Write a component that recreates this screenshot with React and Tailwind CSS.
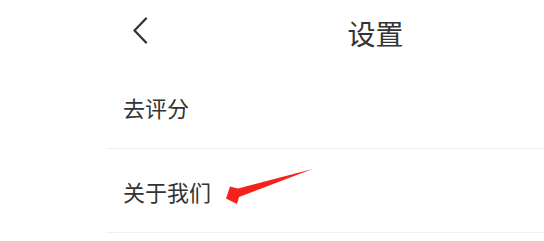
import React from 'react';

const font = { fontFamily: '"Noto Sans CJK SC", "Noto Sans", sans-serif' };

const BackIcon = () => (
    <svg width="16" height="27" viewBox="0 0 16 27" fill="none">
        <path d="M14 1.5 L2.5 13.5 L14 25.5" stroke="#333333" strokeWidth="2.3" strokeLinecap="round" strokeLinejoin="round" />
    </svg>
);

const Row = ({ label }) => (
    <div className="h-[84px] flex items-center pl-[17px] border-b border-[#f0f0f0] text-[22px] text-[#333333]">
        <span className="leading-none">{label}</span>
    </div>
);

export default function App() {
    return (
        <div className="relative w-[544px] h-[241px] overflow-hidden bg-white" style={font}>
            <div className="ml-[106px] w-[539px]">
                {/* header */}
                <div className="relative h-[65px] flex items-center justify-center">
                    <div className="absolute left-[26px] top-[17px]">
                        <BackIcon />
                    </div>
                    <span className="text-[28px] text-[#333333] leading-none">设置</span>
                </div>
                <Row label="去评分" />
                <Row label="关于我们" />
            </div>

            {/* red annotation arrow */}
            <svg className="absolute left-0 top-0" width="544" height="241" viewBox="0 0 544 241">
                <path d="M312.5 169 L238 188.5 L230 186.5 L226 198.5 L237 204 L239 197 Z" fill="#f5221b" />
            </svg>
        </div>
    );
}
